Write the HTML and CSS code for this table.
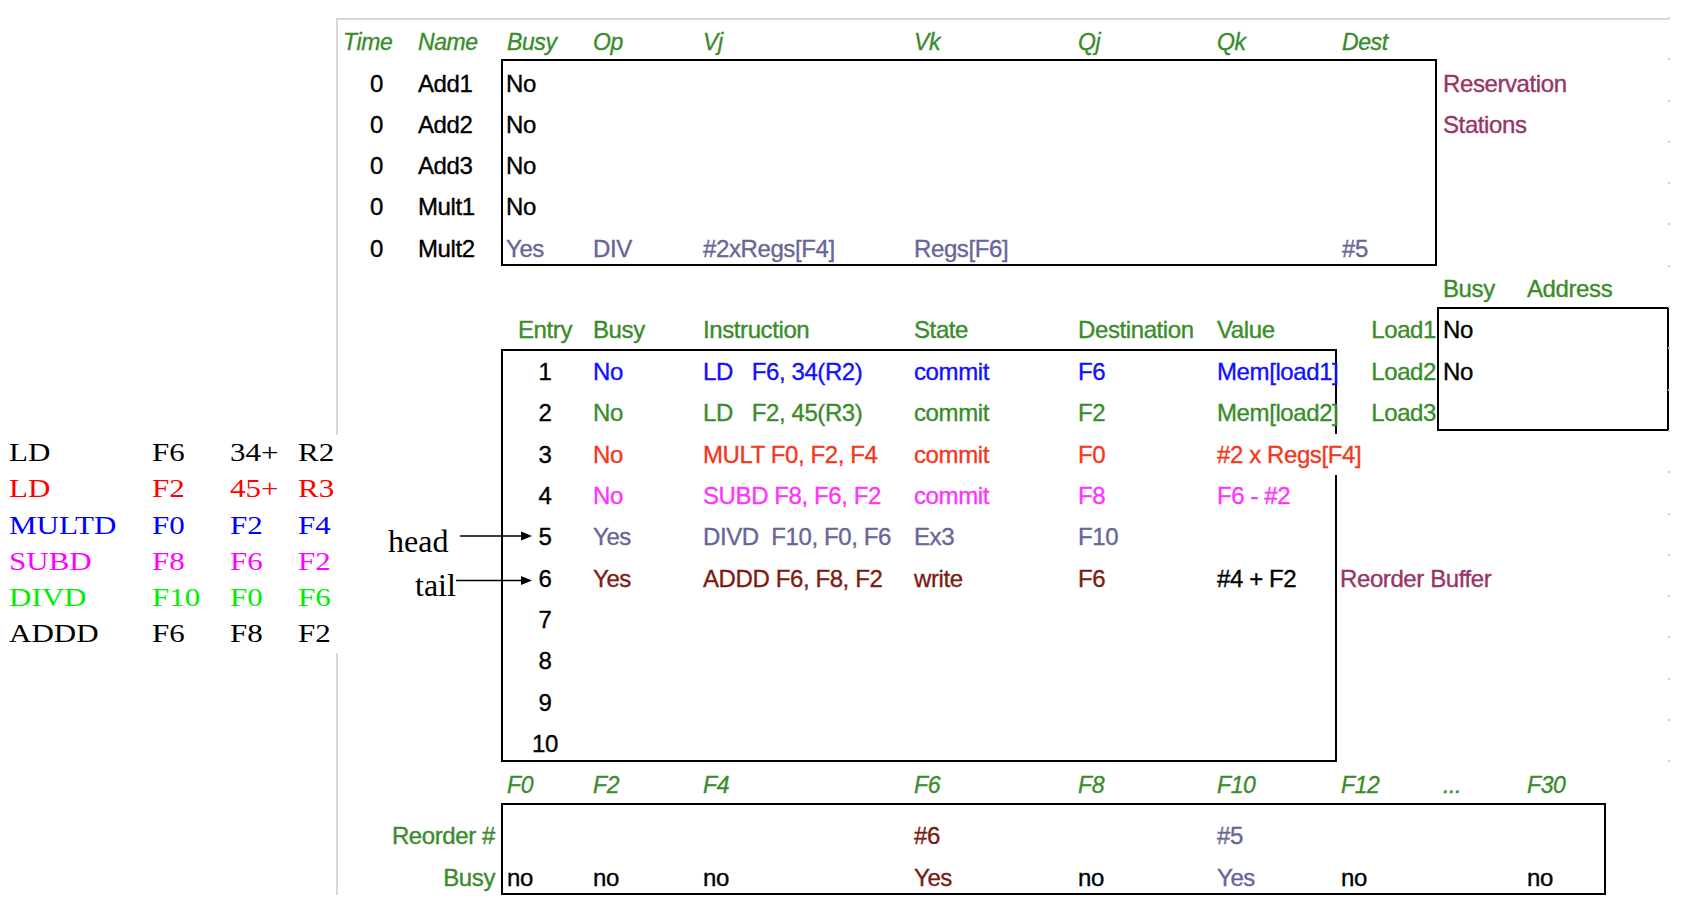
FILE: index.html
```html
<!DOCTYPE html>
<html>
<head>
<meta charset="utf-8">
<title>Tomasulo with Reorder Buffer</title>
<link rel="stylesheet" href="styles.css">
</head>
<body>
<div class="page">
  <div class="frame">
    <section class="rs">
      <div class="rs-head cols-full green ital">
        <span class="p5">Time</span><span>Name</span><span class="p6">Busy</span><span>Op</span><span>Vj</span><span>Vk</span><span>Qj</span><span>Qk</span><span class="p5">Dest</span>
      </div>
      <div class="rs-body">
        <div class="rs-names">
          <span class="num">0</span><span>Add1</span>
          <span class="num">0</span><span>Add2</span>
          <span class="num">0</span><span>Add3</span>
          <span class="num">0</span><span>Mult1</span>
          <span class="num">0</span><span>Mult2</span>
        </div>
        <div class="rs-box">
          <span class="col1 p3">No</span>
          <span class="col1 p3">No</span>
          <span class="col1 p3">No</span>
          <span class="col1 p3">No</span>
          <div class="row slate">
            <span class="col1 p3">Yes</span><span>DIV</span><span>#2xRegs[F4]</span><span>Regs[F6]</span><span class="col7 p5">#5</span>
          </div>
        </div>
        <div class="rs-side maroon">
          <span>Reservation</span>
          <span>Stations</span>
        </div>
      </div>
    </section>

    <section class="mid">
      <div class="rob">
        <div class="rob-head green">
          <span class="entry">Entry</span><span>Busy</span><span>Instruction</span><span>State</span><span>Destination</span><span>Value</span>
        </div>
        <div class="rob-box">
          <div class="row blue"><span class="entry col1 k">1</span><span>No</span><span class="pre">LD   F6, 34(R2)</span><span>commit</span><span>F6</span><span>Mem[load1]</span></div>
          <div class="row green"><span class="entry col1 k">2</span><span>No</span><span class="pre">LD   F2, 45(R3)</span><span>commit</span><span>F2</span><span>Mem[load2]</span></div>
          <div class="row red"><span class="entry col1 k">3</span><span>No</span><span>MULT F0, F2, F4</span><span>commit</span><span>F0</span><span><span class="cover">#2 x Regs[F4]</span></span></div>
          <div class="row mag"><span class="entry col1 k">4</span><span>No</span><span>SUBD F8, F6, F2</span><span>commit</span><span>F8</span><span>F6 - #2</span></div>
          <div class="row slate"><span class="entry col1 k">5</span><span>Yes</span><span class="pre">DIVD  F10, F0, F6</span><span>Ex3</span><span>F10</span></div>
          <div class="row brown"><span class="entry col1 k">6</span><span>Yes</span><span>ADDD F6, F8, F2</span><span>write</span><span>F6</span><span class="k">#4 + F2</span></div>
          <span class="entry col1">7</span>
          <span class="entry col1">8</span>
          <span class="entry col1">9</span>
          <span class="entry col1">10</span>
        </div>
      </div>
      <div class="lb">
        <div class="lb-head green"><span class="col2 p6">Busy</span><span>Address</span></div>
        <div class="lb-body">
          <div class="lb-names green"><span>Load1</span><span>Load2</span><span>Load3</span></div>
          <div class="lb-box"><span>No</span><span>No</span><span></span></div>
        </div>
        <div class="rob-label maroon">Reorder Buffer</div>
      </div>
    </section>

    <section class="regs">
      <div class="reg-head cols-full green ital">
        <span class="col3 p6">F0</span><span>F2</span><span>F4</span><span>F6</span><span>F8</span><span>F10</span><span class="p4">F12</span><span class="p6">...</span><span>F30</span>
      </div>
      <div class="reg-body">
        <div class="reg-names green"><span>Reorder #</span><span>Busy</span></div>
        <div class="reg-box">
          <span class="col4 brown">#6</span><span class="col6 slate">#5</span>
          <span class="col1 p4">no</span><span>no</span><span>no</span><span class="brown">Yes</span><span>no</span><span class="slate">Yes</span><span class="p4">no</span><span class="col9">no</span>
        </div>
      </div>
    </section>
  </div>

  <div class="code">
    <div class="code-grid">
      <div class="row c-black"><span>LD</span><span>F6</span><span>34+</span><span>R2</span></div>
      <div class="row c-red"><span>LD</span><span>F2</span><span>45+</span><span>R3</span></div>
      <div class="row c-blue"><span>MULTD</span><span>F0</span><span>F2</span><span>F4</span></div>
      <div class="row c-mag"><span>SUBD</span><span>F8</span><span>F6</span><span>F2</span></div>
      <div class="row c-green"><span>DIVD</span><span>F10</span><span>F0</span><span>F6</span></div>
      <div class="row c-black"><span>ADDD</span><span>F6</span><span>F8</span><span>F2</span></div>
    </div>
  </div>

  <span class="ptr ptr-head">head</span>
  <span class="ptr ptr-tail">tail</span>
  <svg class="arrows" width="80" height="60" viewBox="0 0 80 60">
    <line x1="5" y1="10" x2="68" y2="10" stroke="#000" stroke-width="1.6"/>
    <polygon points="66,5.5 77,10 66,14.5" fill="#000"/>
    <line x1="1" y1="54.5" x2="68" y2="54.5" stroke="#000" stroke-width="1.6"/>
    <polygon points="66,50 77,54.5 66,59" fill="#000"/>
  </svg>
</div>
</body>
</html>
```

FILE: styles.css
```css
* { box-sizing: border-box; margin: 0; padding: 0; }

html, body { background: #fff; }

body {
  width: 1682px;
  height: 906px;
  overflow: hidden;
  font-family: "Liberation Sans", Arial, sans-serif;
  font-size: 24px;
  letter-spacing: -0.4px;
  color: #000;
}

.page {
  position: relative;
  width: 1682px;
  height: 906px;
  padding: 18px 0 0 336px;
}

.frame {
  position: relative;
  width: 1333px;
  height: 877px;
  border-top: 2px solid #d8d8d8;
  border-left: 2px solid #d8d8d8;
  -webkit-text-stroke: 0.35px currentColor;
}

.frame::after {
  content: "";
  position: absolute;
  left: 1330px;
  top: -3px;
  width: 2px;
  height: 745px;
  background: repeating-linear-gradient(to bottom, #d0d0d0 0 2px, transparent 2px 41.3px);
}

.cols-full {
  display: grid;
  grid-template-columns: 80px 83px 92px 110px 211px 164px 139px 120px 100px 90px 142px;
}

.row { display: contents; }

.rs span, .mid span, .regs span { white-space: nowrap; }
.pre { white-space: pre !important; }

/* colours */
.green { color: #3a8c2a; }
.blue { color: #1010ff; }
.red { color: #f2381e; }
.mag { color: #ff33ff; }
.slate { color: #666699; }
.brown { color: #7d1b12; }
.maroon { color: #993366; }
.k { color: #000; }

.ital { font-style: italic; font-size: 23px; }

/* paddings / columns */
.p3 { padding-left: 3px; }
.p4 { padding-left: 4px; }
.p5 { padding-left: 5px; }
.p6 { padding-left: 6px; }
.col1 { grid-column: 1; }
.col2 { grid-column: 2; }
.col3 { grid-column: 3; }
.col4 { grid-column: 4; }
.col6 { grid-column: 6; }
.col7 { grid-column: 7; }
.col9 { grid-column: 9; }

/* reservation stations */
.rs-head {
  height: 39px;
  line-height: 45px;
}

.rs-body {
  display: flex;
  height: 207px;
}

.rs-names {
  width: 163px;
  padding-top: 3.5px;
  display: grid;
  grid-template-columns: 80px 83px;
  grid-auto-rows: 41.3px;
  line-height: 41.3px;
  align-content: start;
}

.num { padding-left: 32px; }

.rs-box {
  width: 936px;
  height: 207px;
  border: 2px solid #000;
  padding-top: 1.5px;
  display: grid;
  grid-template-columns: 90px 110px 211px 164px 139px 120px 98px;
  grid-auto-rows: 41.3px;
  line-height: 41.3px;
  align-content: start;
}

.rs-side {
  width: 232px;
  padding: 3.5px 0 0 6px;
  display: grid;
  grid-auto-rows: 41.3px;
  line-height: 41.3px;
  align-content: start;
}

/* reorder buffer + load buffers */
.mid {
  display: flex;
  height: 496px;
}

.rob { width: 999px; }

.rob-head {
  height: 83px;
  padding: 44.5px 0 0 165px;
  display: grid;
  grid-template-columns: 90px 110px 211px 164px 139px 118px;
  line-height: 38px;
}

.entry {
  text-align: center;
  padding-right: 6px;
}

.rob-box {
  margin-left: 163px;
  width: 836px;
  height: 413px;
  border: 2px solid #000;
  padding-top: 0.2px;
  display: grid;
  grid-template-columns: 90px 110px 211px 164px 139px 118px;
  grid-auto-rows: 41.3px;
  line-height: 41.3px;
  align-content: start;
}

.cover {
  display: inline-block;
  background: #fff;
  line-height: 41.3px;
  padding-right: 1px;
}

.lb { width: 332px; }

.lb-head {
  height: 41px;
  line-height: 46px;
  display: grid;
  grid-template-columns: 100px 90px 142px;
}

.lb-body {
  display: flex;
  height: 124px;
}

.lb-names {
  width: 100px;
  padding: 2.3px 1px 0 0;
  text-align: right;
  display: grid;
  grid-auto-rows: 41.3px;
  line-height: 41.3px;
  align-content: start;
}

.lb-box {
  width: 232px;
  height: 124px;
  border: 2px solid #000;
  padding: 0.3px 0 0 4px;
  display: grid;
  grid-auto-rows: 41.3px;
  line-height: 41.3px;
  align-content: start;
}

.rob-label {
  margin-top: 126.6px;
  padding: 0.3px 0 0 3px;
  line-height: 41.3px;
  white-space: nowrap;
}

/* register status */
.reg-head {
  height: 41px;
  line-height: 47px;
}

.reg-body {
  display: flex;
  height: 92px;
}

.reg-names {
  width: 163px;
  padding: 12px 6px 0 0;
  text-align: right;
  display: grid;
  grid-auto-rows: 41.6px;
  line-height: 41.6px;
  align-content: start;
}

.reg-box {
  width: 1105px;
  height: 92px;
  border: 2px solid #000;
  padding-top: 10px;
  display: grid;
  grid-template-columns: 90px 110px 211px 164px 139px 120px 100px 90px 77px;
  grid-auto-rows: 41.6px;
  line-height: 41.6px;
  align-content: start;
}

/* instruction list (left) */
.code {
  position: absolute;
  left: 0;
  top: 435px;
  width: 341px;
  height: 218px;
  background: #fff;
  letter-spacing: 0;
}

.code-grid {
  display: grid;
  grid-template-columns: 143px 78px 68px auto;
  grid-auto-rows: 44.85px;
  line-height: 44.85px;
  padding-left: 9px;
  font-family: "Liberation Serif", "Times New Roman", serif;
  font-size: 31px;
  transform: scaleY(0.81);
  transform-origin: 0 0;
  white-space: nowrap;
}

.c-black { color: #000; }
.c-red { color: #ff0000; }
.c-blue { color: #0000ff; }
.c-mag { color: #ff00ff; }
.c-green { color: #00ee00; }

/* head / tail pointers */
.ptr {
  position: absolute;
  font-family: "Liberation Serif", "Times New Roman", serif;
  font-size: 32px;
  line-height: 36px;
  letter-spacing: 0;
  white-space: nowrap;
}

.ptr-head { left: 388px; top: 523px; }
.ptr-tail { left: 415px; top: 567px; }

.arrows {
  position: absolute;
  left: 455px;
  top: 526px;
}
```
